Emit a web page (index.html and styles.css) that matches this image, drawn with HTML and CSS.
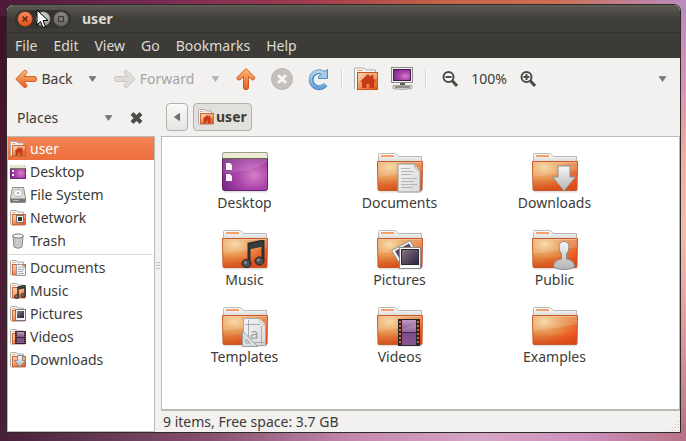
FILE: index.html
```html
<!DOCTYPE html>
<html lang="en">
<head>
<meta charset="utf-8">
<meta name="viewport" content="width=device-width, initial-scale=1">
<title>user</title>
<link rel="stylesheet" href="styles.css">
</head>
<body>
<svg class="sprites" aria-hidden="true">
  <defs>
    <linearGradient id="g-body" x1="0" y1="0" x2="1" y2="1"><stop offset="0" stop-color="#ee9a5c"/><stop offset=".5" stop-color="#e4803c"/><stop offset=".8" stop-color="#f0551f"/><stop offset="1" stop-color="#dc4812"/></linearGradient>
    <radialGradient id="g-glow" cx=".27" cy=".2" r=".7"><stop offset="0" stop-color="#f6d69c"/><stop offset=".5" stop-color="#e9a860" stop-opacity=".6"/><stop offset="1" stop-color="#e88040" stop-opacity="0"/></radialGradient>
    <linearGradient id="g-base" x1="0" y1="0" x2="0" y2="1"><stop offset=".6" stop-color="#d24a18" stop-opacity="0"/><stop offset="1" stop-color="#d24a18" stop-opacity=".8"/></linearGradient>
    <linearGradient id="g-mini" x1="0" y1="0" x2="1" y2="1"><stop offset="0" stop-color="#f6c493"/><stop offset=".5" stop-color="#ee9458"/><stop offset="1" stop-color="#e4541c"/></linearGradient>
    <linearGradient id="g-tab" x1="0" y1="0" x2="0" y2="1"><stop offset="0" stop-color="#fff"/><stop offset="1" stop-color="#d8d8d8"/></linearGradient>
    <linearGradient id="g-grey" x1="0" y1="0" x2="0" y2="1"><stop offset="0" stop-color="#f6f6f6"/><stop offset="1" stop-color="#b4b4b4"/></linearGradient>
    <linearGradient id="g-paper" x1="0" y1="0" x2="1" y2="1"><stop offset="0" stop-color="#f4f4f4"/><stop offset="1" stop-color="#dadada"/></linearGradient>
    <radialGradient id="g-purple" cx=".7" cy=".6" r=".8"><stop offset="0" stop-color="#d580c4"/><stop offset=".45" stop-color="#ac45ab"/><stop offset="1" stop-color="#702880"/></radialGradient>
    <linearGradient id="g-photo" x1="0" y1="0" x2="1" y2="1"><stop offset="0" stop-color="#8b7488"/><stop offset="1" stop-color="#2b1f38"/></linearGradient>
    <linearGradient id="g-film" x1="0" y1="0" x2="0" y2="1"><stop offset="0" stop-color="#c09ac4"/><stop offset=".5" stop-color="#7b4c86"/><stop offset="1" stop-color="#8c5697"/></linearGradient>
    <linearGradient id="g-arrow" x1="0" y1="0" x2="0" y2="1"><stop offset="0" stop-color="#f9bd78"/><stop offset="1" stop-color="#ea5a1e"/></linearGradient>
    <linearGradient id="g-blue" x1="0" y1="0" x2="0" y2="1"><stop offset="0" stop-color="#b4d4ee"/><stop offset="1" stop-color="#6aa5da"/></linearGradient>
  </defs>
  <symbol id="folder" viewBox="0 0 48 42">
    <path d="M3 39.500H46" stroke="#000" stroke-opacity=".12" stroke-width="2"/>
    <path d="M2.500 10V2.500Q2.500 1.500 3.500 1.500H18Q19.500 1.500 21 3L22.500 4.500H45.500V10Z" fill="url(#g-tab)" stroke="#b9b9b9"/>
    <path d="M5 4H18" stroke="#f2a06c" stroke-width="2"/>
    <path d="M1.500 9.500H46.500L46 37.500Q46 38.500 45 38.500H3Q2 38.500 2 37.500Z" fill="url(#g-body)"/>
    <path d="M1.500 9.500H46.500L46 37.500Q46 38.500 45 38.500H3Q2 38.500 2 37.500Z" fill="url(#g-glow)"/>
    <path d="M1.500 9.500H46.500L46 37.500Q46 38.500 45 38.500H3Q2 38.500 2 37.500Z" fill="url(#g-base)" stroke="#c85a2a"/>
    <path d="M2 10.500H46V18Q26 22 2 25Z" fill="#fff" fill-opacity=".16"/>
    <path d="M2.500 10.500H45.500" stroke="#fbc9a4" stroke-opacity=".7"/>
  </symbol>
  <symbol id="mini" viewBox="0 0 16 16">
    <path d="M.5 14.500V1.500Q.5.500 1.500.500H6L8 2H13.500V5" fill="#fbfbfb" stroke="#aaa"/>
    <path d="M2 2.500H5.500" stroke="#f3a77c"/>
    <path d="M.5 14.500V3H13V14.500Z" fill="#f6f3f0"/>
    <path d="M.5 14.500V2" stroke="#aaa"/>
    <rect x="2.500" y="4.500" width="13" height="10" fill="url(#g-mini)" stroke="#cf6434"/>
    <path d="M3 5H15V8L3 11Z" fill="#fff" fill-opacity=".25"/>
    <path d="M1 15.500H15" stroke="#a65b38" stroke-opacity=".4"/>
  </symbol>
  <symbol id="house" viewBox="0 0 16 14"><path d="M0 7.500 8 0 11 3V1H13.500V5L16 7.500H14V14H9.500V10H6.500V14H2V7.500Z" fill="#c8391a"/></symbol>
  <symbol id="paper" viewBox="0 0 24 30"><path d="M1 1H17L23 8V29H1Z" fill="url(#g-paper)" stroke="#999"/><path d="M17 1Q18 7 23 8Z" fill="#fff" stroke="#aaa"/><path d="M4 5.500H13M4 8.500H17M4 11.500H14M4 15.500H20M4 18.500H17M4 21.500H20M4 24.500H16" stroke="#b5b5b5"/></symbol>
  <symbol id="note" viewBox="0 0 24 28"><path d="M8 23V4L22 1V20" fill="none" stroke="#2e2f2f" stroke-width="3"/><path d="M8 7 22 4" stroke="#3b3c3c" stroke-width="5"/><ellipse cx="5.500" cy="23.500" rx="4.500" ry="4" fill="#4c4e50" stroke="#222"/><ellipse cx="18.500" cy="21" rx="4.500" ry="4" fill="#4c4e50" stroke="#222"/><circle cx="4.500" cy="22.500" r="1.500" fill="#8b8d8f"/><circle cx="17.500" cy="20" r="1.500" fill="#8b8d8f"/></symbol>
  <symbol id="down" viewBox="0 0 24 27"><path d="M6 1H18V12H23.500L12 26 .500 12H6Z" fill="url(#g-grey)" stroke="#8e8e8e"/></symbol>
  <symbol id="film" viewBox="0 0 22 27"><rect width="22" height="27" fill="#292529"/><rect x="4" y="1" width="14" height="25" fill="url(#g-film)"/><path d="M4 13.500H18" stroke="#44254b"/><path d="M2 2V26M20 2V26" stroke="#d36b3d" stroke-width="2" stroke-dasharray="2 2"/><path d="M4 10 18 5V13H4Z" fill="#fff" fill-opacity=".15"/></symbol>
  <symbol id="caret" viewBox="0 0 9 6"><path d="M1 .500H8L4.500 5.500Z" fill="currentColor" stroke="currentColor" stroke-opacity=".6"/></symbol>
  <symbol id="arrow" viewBox="0 0 22 20"><path d="M.8 10 9 1.500Q10.500.800 11.500 2T11.500 4.500L9 7.500H20Q21.500 7.500 21.500 10T20 12.500H9L11.500 15.500Q12.500 17 11.500 18T9 18.500Z" stroke="currentColor" stroke-linejoin="round"/></symbol>
  <symbol id="lens" viewBox="0 0 16 16"><circle cx="6.500" cy="6" r="5" fill="#f8f8f7" stroke="#4b4a47" stroke-width="2"/><path d="M10 9.500 15 15" stroke="#4b4a47" stroke-width="3"/><path d="M3.500 6H9.500" stroke="#4b4a47" stroke-width="2"/></symbol>
  <symbol id="desk" viewBox="0 0 48 42"><path d="M3 39.500H46" stroke="#000" stroke-opacity=".12" stroke-width="2"/><rect x="1.500" y="1" width="45" height="37.500" rx="2" fill="url(#g-purple)" stroke="#6b1d70"/><path d="M2 2 46 6V10Q34 19 2 22Z" fill="#fff" fill-opacity=".12"/><path d="M1.500 6.500V2Q1.500.500 3 .500H45Q46.500.500 46.500 2V6.500Z" fill="#ecebd5" stroke="#9c9d85"/><path d="M1 6.500H47" stroke="#66693f"/><path d="M5 11H9L11 13V18H5ZM5 22H9L11 24V29H5Z" fill="#f8f4f8"/></symbol>
</svg>

<div class="window">
  <header class="titlebar">
    <div class="controls">
      <button class="dot dot-close" aria-label="Close"><svg viewBox="0 0 8 8"><path d="M1.500 1.500 6.500 6.500M6.500 1.500 1.500 6.500" stroke="#65240c" stroke-width="1.500"/></svg></button>
      <button class="dot dot-min" aria-label="Minimize"></button>
      <button class="dot" aria-label="Maximize"><svg viewBox="0 0 8 8"><rect x="1.500" y="1.500" width="5" height="5" fill="none" stroke="#3b3a36"/></svg></button>
    </div>
    <h1 class="title">user</h1>
  </header>
  <nav class="menubar">
    <button>File</button><button>Edit</button><button>View</button><button>Go</button><button>Bookmarks</button><button>Help</button>
  </nav>

  <div class="toolbar">
    <button class="tool tool-back"><svg class="arrow orange"><use href="#arrow"/></svg>Back</button>
    <button class="drop" aria-label="Back history"><svg class="caret"><use href="#caret"/></svg></button>
    <button class="tool tool-forward" disabled><svg class="arrow grey"><use href="#arrow"/></svg>Forward</button>
    <button class="drop" disabled aria-label="Forward history"><svg class="caret"><use href="#caret"/></svg></button>
    <button class="tool tool-icon" aria-label="Up"><svg class="ic24" viewBox="0 0 24 24"><path d="M12 1.500 20.500 10Q21.500 11.500 20 12.500T17.500 12.500L14.500 9.500V21Q14.500 22.500 12 22.500T9.500 21V9.500L6.500 12.500Q5 13.500 3.500 12.500T3.500 10Z" fill="url(#g-arrow)" stroke="#c95a26" stroke-linejoin="round"/></svg></button>
    <button class="tool tool-icon" disabled aria-label="Stop"><svg class="ic24" viewBox="0 0 24 24"><circle cx="12" cy="12" r="10.500" fill="#c4c0be" stroke="#b9b5b3"/><path d="M8 8 16 16M16 8 8 16" stroke="#f5f4f2" stroke-width="3"/></svg></button>
    <button class="tool tool-icon" aria-label="Reload"><svg class="ic24" viewBox="0 0 24 24"><path d="M19.500 17.500A8 8 0 1 1 17.500 6" fill="none" stroke="#4f8ac3" stroke-width="5"/><path d="M21.500 2.500V11.500H12.500V9.500Z" fill="#a3c9ea" stroke="#4f8ac3"/><path d="M19.200 17.200A8 8 0 1 1 18 6.500" fill="none" stroke="url(#g-blue)" stroke-width="3"/></svg></button>
    <span class="rule"></span>
    <button class="tool tool-icon" aria-label="Home"><svg class="ic24" viewBox="0 0 24 24"><path d="M.500 22V2Q.500 1 1.500 1H10L12 3H21.500V6" fill="#f7f7f7" stroke="#a9a9a9"/><path d="M3 3.500H9" stroke="#f19a63"/><rect x="3.500" y="5.500" width="20" height="17" fill="url(#g-mini)" stroke="#cb5422"/><path d="M4 6H23V11L4 15Z" fill="#fff" fill-opacity=".2"/><use href="#house" x="6" y="7" width="16" height="14"/></svg></button>
    <button class="tool tool-icon" aria-label="Computer"><svg class="ic24" viewBox="0 0 24 24"><path d="M10 16H15V19H10Z" fill="#5c5d5c"/><path d="M3 18.500H22V21.500Q12 23.500 3 21.500Z" fill="#d7dad5" stroke="#a5a8a3"/><path d="M5 20H20" stroke="#444"/><rect x="1.500" y=".500" width="21" height="15" fill="#f0f1ee" stroke="#8b8d89"/><rect x="3.500" y="2.500" width="17" height="11" fill="url(#g-purple)" stroke="#461b50"/></svg></button>
    <span class="rule"></span>
    <button class="tool tool-icon" aria-label="Zoom out"><svg class="ic16"><use href="#lens"/></svg></button>
    <output class="zoom">100%</output>
    <button class="tool tool-icon" aria-label="Zoom in"><svg class="ic16" viewBox="0 0 16 16"><use href="#lens"/><path d="M6.500 3V9" stroke="#4b4a47" stroke-width="2"/></svg></button>
    <button class="drop drop-end" aria-label="More"><svg class="caret"><use href="#caret"/></svg></button>
  </div>

  <div class="panes">
    <aside class="side">
      <div class="side-head">
        <select class="picker" aria-label="Side pane"><option>Places</option></select>
        <svg class="caret"><use href="#caret"/></svg>
        <button class="side-close" aria-label="Close side pane"><svg class="ic16" viewBox="0 0 16 16"><path d="M3 3.500 12 12.500M12 3.500 3 12.500" stroke="#4c4b48" stroke-width="4"/></svg></button>
      </div>
      <nav class="places">
        <a class="place active" href="#user"><svg class="ic16" viewBox="0 0 16 16"><use href="#mini"/><use href="#house" x="4" y="6" width="10" height="8"/></svg>user</a>
        <a class="place" href="#desktop"><svg class="ic16" viewBox="0 0 16 16"><rect x=".500" y="1.500" width="15" height="13" fill="url(#g-purple)" stroke="#71277c"/><path d="M0 2.500H16" stroke="#e6e5cb" stroke-width="3"/><path d="M0 4.500H16" stroke="#777a54"/><path d="M2 6H4V8H2ZM2 10H4V12H2Z" fill="#fff"/></svg>Desktop</a>
        <a class="place" href="#filesystem"><svg class="ic16" viewBox="0 0 16 16"><path d="M2.500.500H13.500L15.500 11V15.500H.500V11Z" fill="#dededc" stroke="#8c8c8a"/><ellipse cx="8" cy="6" rx="4.500" ry="3.500" fill="#f5f5f4" stroke="#b2b2b0"/><circle cx="8" cy="6" r="1" fill="#999"/><path d="M1 11.500H15V15H1Z" fill="#777775"/><path d="M3 13.500H9" stroke="#bbb"/></svg>File System</a>
        <a class="place" href="#network"><svg class="ic16" viewBox="0 0 16 16"><use href="#mini"/><rect x="6.500" y="5.500" width="7" height="7" fill="#eee" stroke="#777"/><rect x="8" y="7" width="4" height="4" fill="#333"/></svg>Network</a>
        <a class="place" href="#trash"><svg class="ic16" viewBox="0 0 16 16"><path d="M3 3H13L12 14Q8 16.500 4 14Z" fill="#d4d5d4" stroke="#828382"/><path d="M5.500 5 6 13M8 6V14M10.500 5 10 13" stroke="#bbb"/><ellipse cx="8" cy="3" rx="5.500" ry="2" fill="#f4f4f4" stroke="#777877"/></svg>Trash</a>
        <hr class="split">
        <a class="place" href="#documents"><svg class="ic16" viewBox="0 0 16 16"><use href="#mini"/><path d="M6.500 4.500H12.500L15.500 7.500V15.500H6.500Z" fill="#f2f2f2" stroke="#999"/><path d="M12.500 4.500V7.500H15.500M8 7.500H11M8 9.500H14M8 11.500H13M8 13.500H14" stroke="#b0b0b0" fill="none"/></svg>Documents</a>
        <a class="place" href="#music"><svg class="ic16" viewBox="0 0 16 16"><use href="#mini"/><use href="#note" x="4" y="2" width="12" height="14"/></svg>Music</a>
        <a class="place" href="#pictures"><svg class="ic16" viewBox="0 0 16 16"><use href="#mini"/><rect x="5.500" y="3.500" width="10" height="11" fill="#f5f5f5" stroke="#777"/><rect x="7" y="5" width="7" height="7" fill="url(#g-photo)"/></svg>Pictures</a>
        <a class="place" href="#videos"><svg class="ic16" viewBox="0 0 16 16"><use href="#mini"/><rect x="5" y="2" width="11" height="13" fill="#292529"/><rect x="7" y="3" width="7" height="11" fill="url(#g-film)"/><path d="M7 8.500H14" stroke="#44254b"/><path d="M6 3V15M15 3V15" stroke="#d36b3d" stroke-dasharray="1 1"/></svg>Videos</a>
        <a class="place" href="#downloads"><svg class="ic16" viewBox="0 0 16 16"><use href="#mini"/><path d="M7.500 3.500H12.500V8.500H15.500L10 15 4.500 8.500H7.500Z" fill="url(#g-grey)" stroke="#888"/></svg>Downloads</a>
      </nav>
    </aside>
    <div class="grip"><i></i><i></i><i></i></div>
    <section class="content">
      <div class="path">
        <button class="path-back" aria-label="Previous"><svg viewBox="0 0 6 8"><path d="M5.500.500V7.500L.500 4Z" fill="#777673" stroke="#666"/></svg></button>
        <button class="path-here"><svg class="ic16" viewBox="0 0 16 16"><use href="#mini"/><use href="#house" x="4" y="6" width="10" height="8"/></svg>user</button>
      </div>
      <main class="files">
        <a class="file" href="#desktop"><svg class="big"><use href="#desk"/></svg>Desktop</a>
        <a class="file" href="#documents"><svg class="big" viewBox="0 0 48 42"><use href="#folder"/><use href="#paper" x="21" y="11" width="24" height="30"/></svg>Documents</a>
        <a class="file" href="#downloads"><svg class="big" viewBox="0 0 48 42"><use href="#folder"/><use href="#down" x="21" y="13" width="24" height="27"/></svg>Downloads</a>
        <a class="file" href="#music"><svg class="big" viewBox="0 0 48 42"><use href="#folder"/><use href="#note" x="20" y="11" width="24" height="28"/></svg>Music</a>
        <a class="file" href="#pictures"><svg class="big" viewBox="0 0 48 42"><use href="#folder"/><path d="M15.500 21.500 34 11.500 44 28 27 40Z" fill="#f5f5f5" stroke="#888"/><path d="M19 22 33 14.500 40 26 26 34Z" fill="#5d4861"/><rect x="23.500" y="18.500" width="21" height="21" fill="#fafafa" stroke="#888"/><rect x="25.500" y="20.500" width="17" height="15" fill="url(#g-photo)" stroke="#2d2433"/></svg>Pictures</a>
        <a class="file" href="#public"><svg class="big" viewBox="0 0 48 42"><use href="#folder"/><path d="M30.500 30V25Q28 22 28 18 28 12.500 33 12.500T38 18Q38 22 35.500 25V30Q43.500 31 43.500 38 39 40.500 33 40.500T22.500 38Q22.500 31 30.500 30Z" fill="url(#g-grey)" stroke="#8a8a8a"/></svg>Public</a>
        <a class="file" href="#templates"><svg class="big" viewBox="0 0 48 42"><use href="#folder"/><path d="M22.500 12.500H38L44.500 19V39.500H22.500Z" fill="url(#g-paper)" stroke="#aaa"/><path d="M38 12.500Q38.500 18 44.500 19" fill="#fff" stroke="#bbb"/><path d="M27.500 14V35M40.500 20V39M24 18.500H39M29 36.500H44" stroke="#a9abb4"/><text class="glyph" x="29" y="33">a</text><path d="M21.500 25V40.500H37ZM25 33V37H29Z" fill="#dcdde0" fill-rule="evenodd" stroke="#9b9da6"/></svg>Templates</a>
        <a class="file" href="#videos"><svg class="big" viewBox="0 0 48 42"><use href="#folder"/><use href="#film" x="22" y="13" width="22" height="27"/></svg>Videos</a>
        <a class="file" href="#examples"><svg class="big"><use href="#folder"/></svg>Examples</a>
      </main>
      <footer class="status">9 items, Free space: 3.7 GB<svg class="resize" viewBox="0 0 12 12"><path d="M10 1.500H12M7 4.500H12M4 7.500H12M1 10.500H12" stroke="#c3c1bd" stroke-dasharray="1 2"/></svg></footer>
    </section>
  </div>
</div>
<svg class="pointer" viewBox="0 0 13 20" aria-hidden="true"><path d="M1 1V16L4.500 12.500 7 18.500 9.500 17.500 7 11.500H12Z" fill="#fff" stroke="#000" stroke-width="1"/></svg>
</body>
</html>
```
FILE: styles.css
```css
* { box-sizing: border-box; }

body {
  margin: 0;
  padding: 4px 5px 8px 6px;
  min-height: 100vh;
  display: flex;
  font: 14px/18px "Noto Sans", "Open Sans", sans-serif;
  color: #3c3b37;
  background:
    linear-gradient(90deg, #4e1a3a, #7c2c54 25%, #a03c50 45%, #c86446 65%, #cc6e50 80%, #b98cc0) top / 100% 16px no-repeat,
    linear-gradient(90deg, #47203a, #85506f 30%, #c48aae 52%, #d6a5c4 70%, #cc90bc 85%, #b87186) bottom / 100% 16px no-repeat,
    linear-gradient(#b98cc0, #dc90b8 20%, #f3a99c 34%, #f8bba6 52%, #e8a0a4 70%, #b87186) right / 16px 100% no-repeat,
    linear-gradient(#3e1129, #4e1b34 60%, #47203a);
}

button, select {
  font: inherit;
  color: inherit;
  padding: 0;
  border: 0;
  background: none;
}
a { color: inherit; text-decoration: none; }
svg { display: block; flex: none; }

.sprites { position: absolute; width: 0; height: 0; }

.window {
  flex: 1;
  min-width: 0;
  display: flex;
  flex-direction: column;
  border: 1px solid #2c2b28;
  border-radius: 7px 7px 0 0;
  background: #f2f1f0;
  overflow: hidden;
}

.titlebar {
  height: 28px;
  padding: 0 8px;
  display: flex;
  align-items: center;
  gap: 11px;
  color: #dfdbd2;
  background: linear-gradient(#5e5c54, #3f3e39 50%, #3c3b37);
  border-bottom: 1px solid #33322e;
}
.controls {
  display: flex;
  gap: 2px;
  padding: 1px 2px;
  border-radius: 10px;
  background: #34332f;
}
.dot {
  width: 16px;
  height: 16px;
  display: grid;
  place-items: center;
  border: 1px solid #45443f;
  border-radius: 50%;
  background: linear-gradient(#89877f, #66645d);
}
.dot svg { width: 8px; height: 8px; }
.dot-close { background: linear-gradient(#f58c62, #e2511c); border-color: #8a3a1c; }
.dot-min { background: linear-gradient(#d0d0ce, #96958f); }
.title { margin: 0; font-size: 14px; line-height: 18px; }

.menubar {
  height: 25px;
  padding: 0 8px;
  display: flex;
  align-items: center;
  gap: 16px;
  color: #dfdbd2;
  background: #3c3b37;
}

.toolbar {
  height: 41px;
  padding-left: 1px;
  display: flex;
  align-items: center;
}
.tool, .drop {
  height: 32px;
  display: flex;
  align-items: center;
  justify-content: center;
  gap: 4px;
}
.tool-back { width: 72px; }
.tool-forward { width: 98px; }
.tool-icon { width: 36px; }
.toolbar button:disabled { color: #a5a29f; }
.drop { width: 25px; }
.drop-end { margin-left: auto; margin-right: 5px; }
.caret { width: 9px; height: 6px; color: #777572; }
.drop:disabled .caret { color: #b5b2af; }
.arrow { width: 22px; height: 20px; }
.orange { fill: url(#g-arrow); color: #d0652c; }
.toolbar .grey { fill: #dedbd9; color: #c9c6c4; transform: scaleX(-1); }
.ic24 { width: 24px; height: 24px; }
.ic16 { width: 16px; height: 16px; }
.rule { width: 2px; height: 22px; margin: 0 5px; background: #dad8d5; border-right: 1px solid #fff; }
.zoom { width: 42px; text-align: center; }

.panes { flex: 1; display: flex; min-height: 0; }
.side { width: 148px; display: flex; flex-direction: column; }
.side-head {
  height: 37px;
  padding: 0 10px;
  display: flex;
  align-items: center;
  gap: 16px;
}
.picker { flex: 1; min-width: 0; appearance: none; outline: 0; }
.places {
  flex: 1;
  background: #fff;
  border: 1px solid #bcbab5;
}
.place {
  height: 23px;
  padding-left: 2px;
  display: flex;
  align-items: center;
  gap: 4px;
}
.active { color: #fff; background: linear-gradient(#f58355, #eb6f3c); }
.split { margin: 2px 1px 1px; border: 0; border-top: 1px solid #dcdad7; }

.grip {
  width: 6px;
  display: flex;
  flex-direction: column;
  align-items: center;
  justify-content: center;
  gap: 2px;
}
.grip i { width: 4px; height: 1px; background: #c3c1bd; }

.content { flex: 1; min-width: 0; display: flex; flex-direction: column; }
.path { height: 37px; padding: 4px 5px; display: flex; gap: 5px; }
.path button {
  height: 28px;
  display: flex;
  align-items: center;
  justify-content: center;
  gap: 2px;
  border: 1px solid #b3b0ac;
  border-radius: 4px;
}
.path-back { width: 22px; background: linear-gradient(#fafaf9, #e6e4e2); }
.path-back svg { width: 6px; height: 8px; }
.path .path-here { padding: 0 4px; font-weight: bold; background: #e2e0dd; }

.files {
  flex: 1;
  padding: 15px 5px;
  display: flex;
  flex-wrap: wrap;
  align-content: flex-start;
  row-gap: 17px;
  background: #fff;
  border: 1px solid #bcbab5;
  border-bottom-width: 2px;
}
.file {
  width: 155px;
  display: flex;
  flex-direction: column;
  align-items: center;
}
.big { width: 48px; height: 42px; }
.glyph { font: 15px "Noto Sans", sans-serif; fill: #9b9da6; }

.status {
  height: 21px;
  padding-left: 2px;
  display: flex;
  align-items: center;
  justify-content: space-between;
}
.resize { width: 12px; height: 12px; align-self: flex-end; }

/* Lies over the title bar controls */
.pointer { position: absolute; left: 36px; top: 9px; width: 13px; height: 20px; }
```
